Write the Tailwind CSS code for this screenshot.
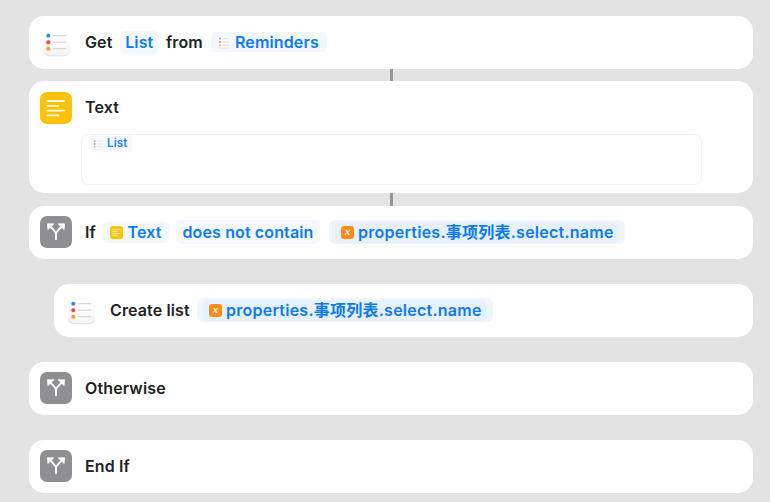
<!DOCTYPE html>
<html lang="en">
<head>
<meta charset="utf-8">
<title>Shortcut</title>
<script src="https://cdn.jsdelivr.net/npm/@tailwindcss/browser@4"></script>
</head>
<body class="bg-[#e3e3e3] overflow-hidden">
<svg width="0" height="0" class="absolute" aria-hidden="true">
  <defs>
    <linearGradient id="tile" x1="0" y1="0" x2="0" y2="1"><stop offset="0" stop-color="#ffffff"/><stop offset=".4" stop-color="#fdfdfd"/><stop offset="1" stop-color="#f4f4f2"/></linearGradient>
    <linearGradient id="edge" x1="0" y1="0" x2="0" y2="1"><stop offset=".4" stop-color="#dededc" stop-opacity="0"/><stop offset="1" stop-color="#dededc"/></linearGradient>
    <symbol id="reminders" viewBox="0 0 32 32">
      <rect x="3" y="4.2" width="27" height="26" rx="6" fill="url(#edge)"/>
      <rect x="3.2" y="3.2" width="26.6" height="26" rx="6" fill="url(#tile)"/>
      <g stroke="#d0d0d0" stroke-width="1"><path d="M13 9.7h13.3M13 16.2h13.3M13 22.7h13.3"/></g>
      <circle cx="8.3" cy="9.7" r="2.8" fill="#dceafc"/><circle cx="8.3" cy="16.2" r="2.8" fill="#fbe0de"/><circle cx="8.3" cy="22.7" r="2.8" fill="#faebd6"/>
      <circle cx="8.3" cy="9.7" r="1.9" fill="#2f86ed"/><circle cx="8.3" cy="16.2" r="1.9" fill="#e8463c"/><circle cx="8.3" cy="22.7" r="1.9" fill="#e99a3a"/>
    </symbol>
    <symbol id="text" viewBox="0 0 32 32">
      <rect width="32" height="32" rx="7" fill="#ffc20a"/>
      <path d="M7.3 9h16.9M7.3 13.8h11M7.3 18.6h16.9M7.3 23.4h11" stroke="#fffbea" stroke-width="1.8" stroke-linecap="round"/>
    </symbol>
    <symbol id="branch" viewBox="0 0 32 32">
      <rect width="32" height="32" rx="7" fill="#8e8e93"/>
      <path d="M16 23.3V18.8C16 16.3 15 15.2 13.4 13.6L10.5 10.8M16 18.8C16 16.3 17 15.2 18.6 13.6L21.5 10.8" stroke="#fff" stroke-width="1.9" stroke-linecap="round" fill="none"/>
      <path d="M7.4 7.8h6.6L7.9 13.6zM24.6 7.8h-6.6L24.1 13.6z" fill="#fff" stroke="#fff" stroke-width=".7" stroke-linejoin="round"/>
    </symbol>
    <symbol id="minilist" viewBox="0 0 14 14">
      <rect x="1" y="2.2" width="12" height="11.3" rx="2.5" fill="#e0e3ea"/>
      <rect x="1" y="1" width="12" height="11.7" rx="2.5" fill="#fafafc"/>
      <path d="M5.5 3.6h6.5M5.5 7h6.5M5.5 10.3h6.5" stroke="#d5d7dc" stroke-width=".8"/>
      <circle cx="3" cy="3.6" r="1.1" fill="#79a9ee"/><circle cx="3" cy="7" r="1.1" fill="#ed8078"/><circle cx="3" cy="10.3" r="1.1" fill="#efb26d"/>
    </symbol>
  </defs>
</svg>
<main class="w-[770px] h-[502px] pl-[29px] pt-4 flex flex-col items-start font-['Inter','Noto_Sans_CJK_SC',sans-serif] font-semibold text-[16px] leading-[20px] tracking-[0.13px] text-[#222223] whitespace-nowrap">

  <section class="w-[724px] h-[52.7px] rounded-[15px] bg-white flex items-center pl-[11px] shrink-0">
    <svg class="size-8 shrink-0"><use href="#reminders"/></svg>
    <span class="ml-[13px] w-[34.5px]">Get</span>
    <span class="w-[39.5px] h-[23px] rounded-[5px] bg-[#f4f9ff] text-[#0a7aff] flex items-center justify-center">List</span>
    <span class="ml-[7px] w-[44.5px]">from</span>
    <span class="w-[116px] h-5 rounded-[4px] bg-[#f3f8ff] text-[#0a7aff] flex items-center pl-[6.5px]"><svg class="size-[14px] mr-[4px] shrink-0"><use href="#minilist"/></svg>Reminders</span>
  </section>

  <div class="ml-[361px] w-[2.5px] h-[12.6px] bg-[#969696] shrink-0"></div>

  <section class="w-[724px] h-[112.2px] rounded-[15px] bg-white pl-[11px] pt-[10.5px] shrink-0">
    <div class="flex items-center h-8">
      <svg class="size-8 shrink-0"><use href="#text"/></svg>
      <span class="ml-[13px] -mt-px">Text</span>
    </div>
    <div class="ml-[41px] mt-[10.5px] w-[620.5px] h-[51px] rounded-[7px] border border-[#f2f2f2] pl-[7px]">
      <span class="w-[43px] h-[17px] rounded-[4px] bg-[#f4f9ff] text-[#2684fb] text-[11.5px] leading-[17px] flex items-center pl-[3px]"><svg class="size-[12px] mr-[3px] shrink-0"><use href="#minilist"/></svg>List</span>
    </div>
  </section>

  <div class="ml-[361px] w-[2.5px] h-[12.5px] bg-[#969696] shrink-0"></div>

  <section class="w-[724px] h-[53px] rounded-[15px] bg-white flex items-center pl-[11px] shrink-0">
    <svg class="size-8 shrink-0"><use href="#branch"/></svg>
    <span class="ml-[13px] w-[17.5px]">If</span>
    <span class="w-[66px] h-[21px] rounded-[5px] bg-[#f3f8ff] text-[#0a7aff] flex items-center pl-[7px]"><svg class="size-[13px] mr-[5px] shrink-0"><use href="#text"/></svg>Text</span>
    <span class="ml-[7.5px] w-[144px] h-[24px] rounded-[5px] bg-[#f4f9ff] text-[#0a7aff] flex items-center justify-center">does not contain</span>
    <span class="ml-[9px] w-[296px] h-[24px] rounded-[6px] bg-[#f0f6ff] text-[#0a7aff] flex items-center px-[6px]">
      <span class="w-[284px] h-[21px] rounded-[5px] bg-[#e7f1fe] tracking-[0.25px] flex items-center pl-[6px]"><span class="size-[13px] mr-[4px] rounded-[3px] bg-[#fb8c17] text-white/90 font-['Liberation_Serif',serif] italic text-[11px] leading-[11px] text-center shrink-0">x</span>properties.事项列表.select.name</span>
    </span>
  </section>

  <section class="ml-[25px] mt-[25px] w-[699px] h-[53px] rounded-[15px] bg-white flex items-center pl-[11px] shrink-0">
    <svg class="size-8 shrink-0"><use href="#reminders"/></svg>
    <span class="ml-[13px] w-[87px]">Create list</span>
    <span class="w-[296px] h-[24px] rounded-[6px] bg-[#f0f6ff] text-[#0a7aff] flex items-center px-[6px]">
      <span class="w-[284px] h-[21px] rounded-[5px] bg-[#e7f1fe] tracking-[0.25px] flex items-center pl-[6px]"><span class="size-[13px] mr-[4px] rounded-[3px] bg-[#fb8c17] text-white/90 font-['Liberation_Serif',serif] italic text-[11px] leading-[11px] text-center shrink-0">x</span>properties.事项列表.select.name</span>
    </span>
  </section>

  <section class="mt-[25px] w-[724px] h-[53px] rounded-[15px] bg-white flex items-center pl-[11px] shrink-0">
    <svg class="size-8 shrink-0"><use href="#branch"/></svg>
    <span class="ml-[13px]">Otherwise</span>
  </section>

  <section class="mt-[25px] w-[724px] h-[53px] rounded-[15px] bg-white flex items-center pl-[11px] shrink-0">
    <svg class="size-8 shrink-0"><use href="#branch"/></svg>
    <span class="ml-[13px]">End If</span>
  </section>
</main>
</body>
</html>
